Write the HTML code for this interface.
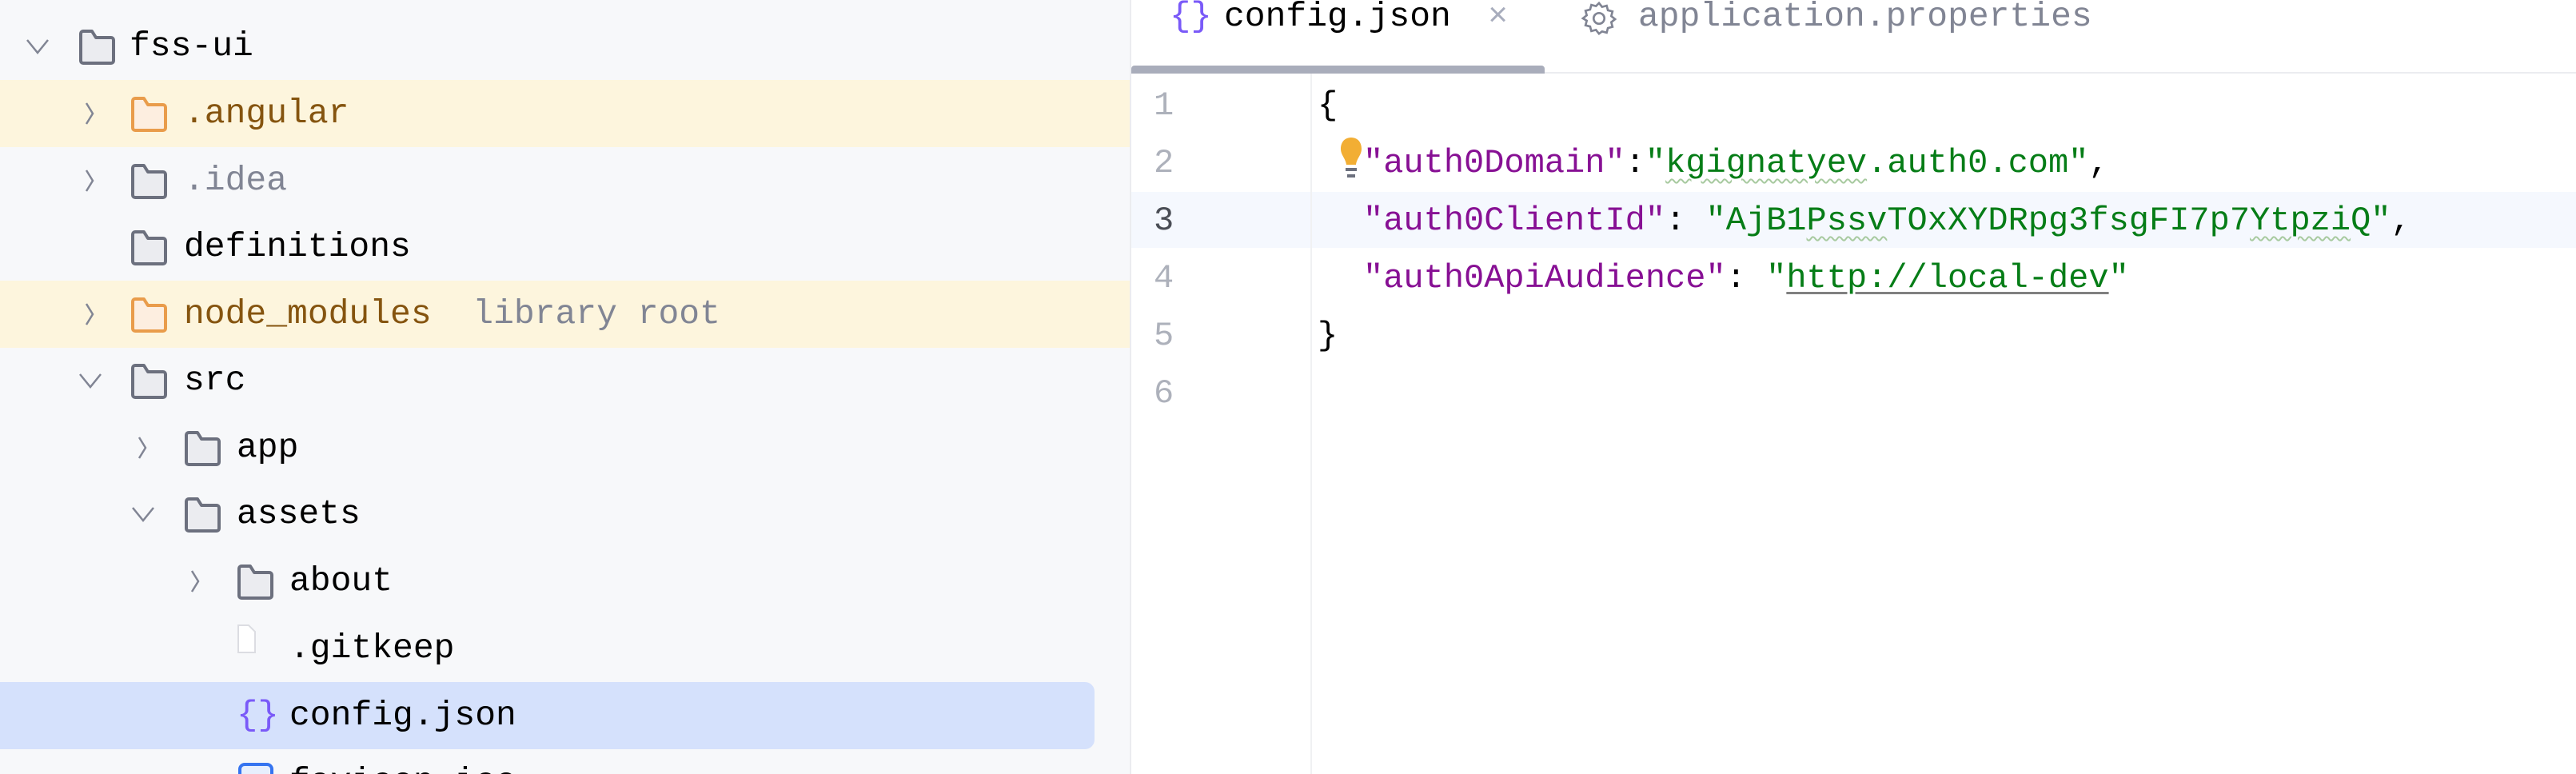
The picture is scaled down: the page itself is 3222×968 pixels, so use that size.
<!DOCTYPE html>
<html style="overflow:hidden;width:3222px;height:968px"><head><meta charset="utf-8"><style>
body{margin:0;width:3222px;height:968px;overflow:hidden;background:#fff;font-family:"Liberation Mono",monospace;font-size:42px;position:relative}
.side{position:absolute;left:0;top:0;width:1413px;height:968px;background:#f7f8fa;border-right:2px solid #ebecf0;overflow:hidden}
.row{position:absolute;left:0;width:1413px;height:84px}
.t{position:absolute;line-height:84px;top:0;white-space:pre;color:#000;font-size:43px}
.ic{position:absolute;top:20px}
.ch{position:absolute;top:27px}
.yel{background:#fdf5dd}
.sel{background:#d5e1fc;width:1369px;border-radius:0 12px 12px 0}
.ed{position:absolute;left:1415px;top:0;right:0;bottom:0;overflow:hidden}
.ln{position:absolute;left:28px;width:40px;color:#adb1bb;line-height:72px;text-align:left}
.cl{position:absolute;left:233px;white-space:pre;line-height:72px}
.k{color:#871094}.s{color:#067d17}
.wv{text-decoration:underline wavy #a8caa0;text-decoration-thickness:2px;text-underline-offset:8px}
</style></head><body>
<div class="side">
<svg width="0" height="0" style="position:absolute"><defs>
<g id="fold"><path d="M3 6 V40 a3 3 0 0 0 3 3 H41 a3 3 0 0 0 3-3 V14 a3 3 0 0 0-3-3 H22 L17 3 H6 a3 3 0 0 0-3 3z" stroke-width="4" stroke-linejoin="round"/></g>
<g id="chr"><path d="M4 2 L12 15 L4 28" fill="none" stroke="#818594" stroke-width="2.5"/></g>
<g id="chd"><path d="M2 6 L15 22 L28 6" fill="none" stroke="#818594" stroke-width="2.5"/></g>
</defs></svg>

<div class="row" style="top:16px"><svg class="ch" style="left:32px;top:28px" width="30" height="30"><use href="#chd"/></svg><svg class="ic" style="left:98px" width="48" height="46"><use href="#fold" fill="#ebecf0" stroke="#6c707e"/></svg><span class="t" style="left:162px">fss-ui</span></div>

<div class="row yel" style="top:100px"><svg class="ch" style="left:104px" width="20" height="30"><use href="#chr"/></svg><svg class="ic" style="left:163px" width="48" height="46"><use href="#fold" fill="#fdeee0" stroke="#e99c4b"/></svg><span class="t" style="left:230px;color:#85540f">.angular</span></div>

<div class="row" style="top:184px"><svg class="ch" style="left:104px" width="20" height="30"><use href="#chr"/></svg><svg class="ic" style="left:163px" width="48" height="46"><use href="#fold" fill="#ebecf0" stroke="#6c707e"/></svg><span class="t" style="left:230px;color:#818594">.idea</span></div>

<div class="row" style="top:267px"><svg class="ic" style="left:163px" width="48" height="46"><use href="#fold" fill="#ebecf0" stroke="#6c707e"/></svg><span class="t" style="left:230px">definitions</span></div>

<div class="row yel" style="top:351px"><svg class="ch" style="left:104px" width="20" height="30"><use href="#chr"/></svg><svg class="ic" style="left:163px" width="48" height="46"><use href="#fold" fill="#fdeee0" stroke="#e99c4b"/></svg><span class="t" style="left:230px;color:#85540f">node_modules  <span style="color:#818594">library root</span></span></div>

<div class="row" style="top:434px"><svg class="ch" style="left:98px;top:28px" width="30" height="30"><use href="#chd"/></svg><svg class="ic" style="left:163px" width="48" height="46"><use href="#fold" fill="#ebecf0" stroke="#6c707e"/></svg><span class="t" style="left:230px">src</span></div>

<div class="row" style="top:518px"><svg class="ch" style="left:170px" width="20" height="30"><use href="#chr"/></svg><svg class="ic" style="left:230px" width="48" height="46"><use href="#fold" fill="#ebecf0" stroke="#6c707e"/></svg><span class="t" style="left:296px">app</span></div>

<div class="row" style="top:601px"><svg class="ch" style="left:164px;top:28px" width="30" height="30"><use href="#chd"/></svg><svg class="ic" style="left:230px" width="48" height="46"><use href="#fold" fill="#ebecf0" stroke="#6c707e"/></svg><span class="t" style="left:296px">assets</span></div>

<div class="row" style="top:685px"><svg class="ch" style="left:236px" width="20" height="30"><use href="#chr"/></svg><svg class="ic" style="left:296px" width="48" height="46"><use href="#fold" fill="#ebecf0" stroke="#6c707e"/></svg><span class="t" style="left:362px">about</span></div>

<div class="row" style="top:769px"><svg class="ic" style="left:297px;top:12px" width="24" height="36"><path d="M1 1 H14 L22 9 V35 H1z" fill="#fff" stroke="#dcdde2" stroke-width="2"/></svg><span class="t" style="left:362px">.gitkeep</span></div>

<div class="row sel" style="top:853px"><span class="t" style="left:296px;color:#7a5af8;font-size:44px">{}</span><span class="t" style="left:362px">config.json</span></div>

<div class="row" style="top:936px;height:32px;overflow:hidden"><svg class="ic" style="left:298px;top:18px" width="46" height="46"><rect x="2" y="2" width="40" height="40" rx="6" fill="#e7effd" stroke="#3574f0" stroke-width="4"/></svg><span class="t" style="left:362px">favicon.ico</span></div>
</div>

<div class="ed">
<div style="position:absolute;left:0;right:0;top:0;height:90px;border-bottom:2px solid #ebecf0"></div>
<div style="position:absolute;left:0;top:82px;width:517px;height:10px;background:#a9adbb;border-radius:4px 4px 0 0"></div>
<span style="position:absolute;left:48px;top:-2px;line-height:46px;color:#7a5af8;font-size:44px">{}</span>
<span style="position:absolute;left:116px;top:-2px;line-height:46px;font-size:43px">config.json</span>
<span style="position:absolute;left:446px;top:-2px;line-height:46px;color:#a8adbd">×</span>
<svg style="position:absolute;left:562px;top:0" width="46" height="46" viewBox="0 0 24 24"><path d="M12 2 l2 2.5 3-.8 .8 3 3 .8 -.8 3 2.5 2 -2.5 2 .8 3 -3 .8 -.8 3 -3-.8 L12 22 l-2-2.5 -3 .8 -.8-3 -3-.8 .8-3 L1.5 12 4 10 3.2 7 6.2 6.2 7 3.2 10 4z" fill="none" stroke="#818594" stroke-width="1.4"/><circle cx="12" cy="12" r="3.5" fill="none" stroke="#818594" stroke-width="1.4"/></svg>
<span style="position:absolute;left:634px;top:-2px;line-height:46px;color:#818594;font-size:43px">application.properties</span>

<div style="position:absolute;left:0;right:0;top:240px;height:70px;background:#f5f8fe"></div>
<div style="position:absolute;left:224px;top:92px;bottom:0;border-left:2px solid #f0f1f3"></div>

<div class="ln" style="top:96px">1</div>
<div class="ln" style="top:168px">2</div>
<div class="ln" style="top:240px;color:#4a4d55">3</div>
<div class="ln" style="top:312px">4</div>
<div class="ln" style="top:384px">5</div>
<div class="ln" style="top:456px">6</div>

<div class="cl" style="top:96px">{</div>
<svg style="position:absolute;left:258px;top:170px" width="34" height="56" viewBox="0 0 34 56"><path d="M17 2 C8 2 4 9 4 16 C4 24 10 28 11 36 H23 C24 28 30 24 30 16 C30 9 26 2 17 2z" fill="#f2ae34"/><rect x="10" y="40" width="14" height="4" fill="#6c707e"/><rect x="12" y="48" width="10" height="4" fill="#6c707e"/></svg>
<div class="cl" style="top:168px;left:290px"><span class="k">"auth0Domain"</span>:<span class="s">"<span class="wv">kgignatyev</span>.auth0.com"</span>,</div>
<div class="cl" style="top:240px;left:290px"><span class="k">"auth0ClientId"</span>: <span class="s">"AjB1<span class="wv">Pssv</span>TOxXYDRpg3fsgFI7p7<span class="wv">Ytpzi</span>Q"</span>,</div>
<div class="cl" style="top:312px;left:290px"><span class="k">"auth0ApiAudience"</span>: <span class="s">"<span style="text-decoration:underline #808080;text-underline-offset:6px;text-decoration-thickness:3px">http://local-dev</span>"</span></div>
<div class="cl" style="top:384px">}</div>
</div>
</body></html>
